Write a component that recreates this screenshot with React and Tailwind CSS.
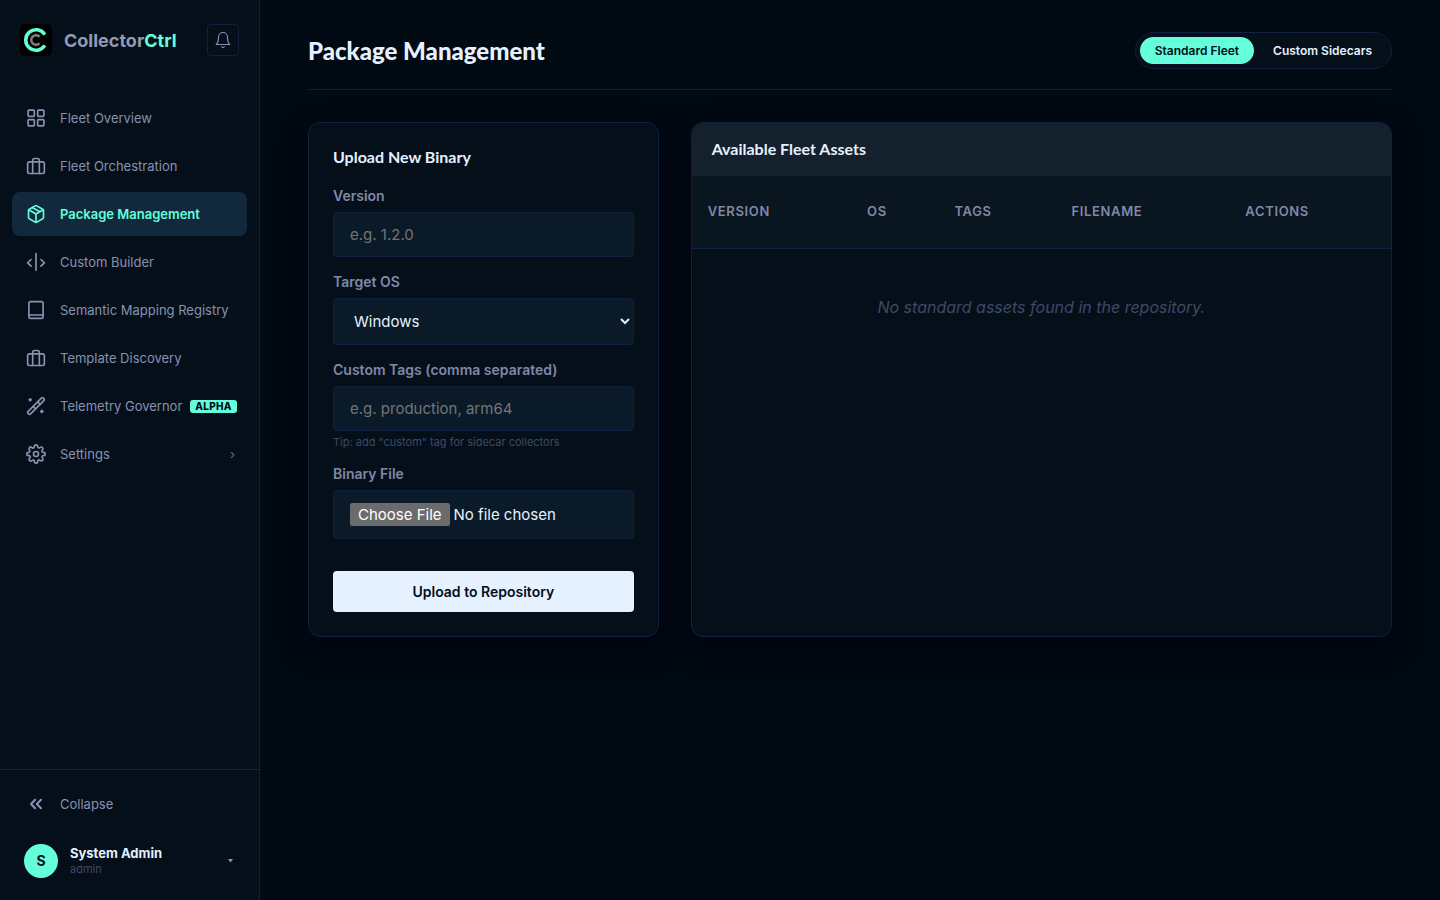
import { useState } from 'react'

function Icon({ size = 20, stroke = 2, children }) {
  return (
    <svg
      width={size}
      height={size}
      viewBox="0 0 24 24"
      fill="none"
      stroke="currentColor"
      strokeWidth={stroke}
      strokeLinecap="round"
      strokeLinejoin="round"
      aria-hidden="true"
      className="shrink-0"
    >
      {children}
    </svg>
  )
}

const GridIcon = () => (
  <Icon>
    <rect x="2.5" y="2.5" width="7.5" height="7.5" rx="1" />
    <rect x="14" y="2.5" width="7.5" height="7.5" rx="1" />
    <rect x="2.5" y="14" width="7.5" height="7.5" rx="1" />
    <rect x="14" y="14" width="7.5" height="7.5" rx="1" />
  </Icon>
)

const CaseIcon = () => (
  <Icon>
    <rect x="2" y="7" width="20" height="14" rx="2" />
    <path d="M16 21V5a2 2 0 0 0-2-2h-4a2 2 0 0 0-2 2v16" />
  </Icon>
)

const PackageIcon = () => (
  <Icon>
    <path d="M21 16V8a2 2 0 0 0-1-1.73l-7-4a2 2 0 0 0-2 0l-7 4A2 2 0 0 0 3 8v8a2 2 0 0 0 1 1.73l7 4a2 2 0 0 0 2 0l7-4A2 2 0 0 0 21 16z" />
    <path d="M16.5 9.4 7.5 4.21M3.27 6.96 12 12.01l8.73-5.05M12 22.08V12" />
  </Icon>
)

const BuilderIcon = () => (
  <Icon>
    <path d="M12 2v20M18 9l4 4-4 4M6 9l-4 4 4 4" />
  </Icon>
)

const BookIcon = () => (
  <Icon>
    <rect x="3.5" y="2" width="17" height="20" rx="2" />
    <path d="M4 18h16" />
  </Icon>
)

const WandIcon = () => (
  <Icon>
    <path d="M18.5 2.6 2.6 18.5a1.7 1.7 0 0 0 0 2.4l.5.5a1.7 1.7 0 0 0 2.4 0L21.4 5.5a1.7 1.7 0 0 0 0-2.4l-.5-.5a1.7 1.7 0 0 0-2.4 0z" />
    <path d="M14 7l3 3M8.5 12.5l3 3" />
    <path d="M4 4.5h2M5 3.5v2M18 18.5h2M19 17.5v2" strokeWidth="2.5" />
  </Icon>
)

const GearIcon = () => (
  <Icon>
    <circle cx="12" cy="12" r="3" />
    <path d="M19.4 15a1.65 1.65 0 0 0 .33 1.82l.06.06a2 2 0 1 1-2.83 2.83l-.06-.06a1.65 1.65 0 0 0-2.8 1.17V21a2 2 0 0 1-4 0v-.09a1.65 1.65 0 0 0-2.9-1.08l-.06.06a2 2 0 1 1-2.83-2.83l.06-.06A1.65 1.65 0 0 0 3.09 14H3a2 2 0 0 1 0-4h.09a1.65 1.65 0 0 0 1.18-2.82l-.06-.06a2 2 0 1 1 2.83-2.83l.06.06A1.65 1.65 0 0 0 10 3.09V3a2 2 0 0 1 4 0v.09a1.65 1.65 0 0 0 2.82 1.17l.06-.06a2 2 0 1 1 2.83 2.83l-.06.06A1.65 1.65 0 0 0 20.91 10H21a2 2 0 0 1 0 4h-.09a1.65 1.65 0 0 0-1.51 1z" />
  </Icon>
)

const NAV = [
  { label: 'Fleet Overview', icon: GridIcon },
  { label: 'Fleet Orchestration', icon: CaseIcon },
  { label: 'Package Management', icon: PackageIcon, active: true },
  { label: 'Custom Builder', icon: BuilderIcon },
  { label: 'Semantic Mapping Registry', icon: BookIcon },
  { label: 'Template Discovery', icon: CaseIcon },
  { label: 'Telemetry Governor', icon: WandIcon, badge: 'ALPHA' },
  { label: 'Settings', icon: GearIcon, expandable: true },
]

const COLUMNS = ['Version', 'OS', 'Tags', 'Filename', 'Actions']
const FLEETS = ['Standard Fleet', 'Custom Sidecars']

const fieldClass =
  'block w-full rounded-sm border border-[#0f2040] bg-[#0a1a28] px-4 py-3 text-[15px] leading-[19px] text-[#e6f1ff] outline-none placeholder:text-[#757575]'
const labelClass = 'mb-2 block text-sm leading-[17px] font-semibold text-[#8088a8]'

function Logo() {
  return (
    <svg width="32" height="32" viewBox="0 0 32 32" fill="none" aria-hidden="true" className="shrink-0">
      <rect width="32" height="32" rx="5" fill="#000" />
      <path d="M24.8 10.6A10.3 10.3 0 1 0 24.8 21.4" stroke="#64ffda" strokeWidth="3.5" />
      <path d="M19.6 12.8A4.8 4.8 0 1 0 19.6 19.2" stroke="#808080" strokeWidth="2.4" />
    </svg>
  )
}

function Sidebar() {
  return (
    <aside className="sticky top-0 flex h-screen w-65 shrink-0 flex-col border-r border-[#0f2040] bg-[#040f1a]">
      <div className="flex items-center px-5 py-6">
        <Logo />
        <span className="ml-3 flex-1 text-lg leading-[25px] font-bold text-[#8f9bb3]">
          Collector<span className="text-[#64ffda]">Ctrl</span>
        </span>
        <button
          type="button"
          aria-label="Notifications"
          className="flex size-8 items-center justify-center rounded-sm border border-[#0f2040] text-[#8892b0]"
        >
          <Icon size={18} stroke={1.5}>
            <path d="M18 8A6 6 0 0 0 6 8c0 7-2 9-3 10h18c-1-1-3-3-3-10M10.3 21a2 2 0 0 0 3.4 0" />
          </Icon>
        </button>
      </div>

      <nav className="flex flex-1 flex-col gap-1 px-3 py-4">
        {NAV.map(({ label, icon: NavIcon, active, badge, expandable }) => (
          <a
            key={label}
            href="#"
            aria-current={active ? 'page' : undefined}
            className={
              'flex h-11 items-center rounded-lg pl-3.5 pr-2 text-[13px] leading-5 whitespace-nowrap ' +
              (active ? 'bg-[#12293d] font-semibold text-[#64ffda]' : 'text-[#8892b0]')
            }
          >
            <NavIcon />
            <span className="ml-3.5">{label}</span>
            {badge && (
              <span className="ml-2 rounded-[3px] bg-[#64ffda] px-[5px] text-[10px] leading-[13px] font-extrabold tracking-wide text-[#020c1b]">
                {badge}
              </span>
            )}
            {expandable && <span className="mr-1 ml-auto text-[13px] opacity-70">›</span>}
          </a>
        ))}
      </nav>

      <div className="border-t border-[#0f2a40] px-3 pt-3 pb-4">
        <button type="button" className="flex h-11 w-full items-center pl-3.5 text-[13px] leading-5 text-[#8892b0]">
          <Icon stroke={2.5}>
            <path d="m11 17-5-5 5-5M18 17l-5-5 5-5" />
          </Icon>
          <span className="ml-3.5">Collapse</span>
        </button>
        <button type="button" className="mt-3 flex w-full items-center py-1.5 pr-3.5 pl-3 text-left">
          <span className="flex size-[34px] items-center justify-center rounded-full bg-[#64ffda] text-sm font-bold text-[#020c1b]">
            S
          </span>
          <span className="ml-3 flex-1">
            <span className="block text-[13px] leading-4 font-bold text-[#e6f1ff]">System Admin</span>
            <span className="block text-[11px] leading-4 text-[#3d4a63]">admin</span>
          </span>
          <svg width="5" height="4" viewBox="0 0 5 4" fill="#8892b0" aria-hidden="true">
            <path d="M0 0h5L2.5 3.5z" />
          </svg>
        </button>
      </div>
    </aside>
  )
}

function UploadCard() {
  return (
    <form className="rounded-xl border border-[#0f2040] bg-[#040f1a] p-6 shadow-[0_10px_30px_#000411]">
      <h2 className="mb-5 font-[Lato,sans-serif] text-base leading-5 font-bold text-[#e6f1ff]">Upload New Binary</h2>
      <div className="mb-4">
        <label htmlFor="version" className={labelClass}>Version</label>
        <input id="version" type="text" placeholder="e.g. 1.2.0" className={fieldClass} />
      </div>
      <div className="mb-4">
        <label htmlFor="os" className={labelClass}>Target OS</label>
        <select id="os" className={fieldClass + ' h-[47px] scheme-dark'}>
          <option>Windows</option>
          <option>Linux</option>
        </select>
      </div>
      <div className="mb-4">
        <label htmlFor="tags" className={labelClass}>Custom Tags (comma separated)</label>
        <input id="tags" type="text" placeholder="e.g. production, arm64" className={fieldClass} />
        <p className="mt-1 text-[11px] leading-[14px] text-[#3d4a63]">
          Tip: add "custom" tag for sidecar collectors
        </p>
      </div>
      <div className="mb-8">
        <label htmlFor="binary" className={labelClass}>Binary File</label>
        <input
          id="binary"
          type="file"
          className={
            fieldClass +
            ' file:mr-1 file:rounded-xs file:bg-[#6b6b6b] file:px-2 file:py-0.5 file:leading-[19px] file:text-white'
          }
        />
      </div>
      <button
        type="button"
        className="block w-full rounded-sm bg-[#e6f1ff] py-3 text-sm leading-[17px] font-semibold text-[#020c1b]"
      >
        Upload to Repository
      </button>
    </form>
  )
}

function AssetsCard() {
  return (
    <section className="overflow-hidden rounded-xl border border-[#0f2040] bg-[#040f1a] shadow-[0_10px_30px_#000411]">
      <div className="border-b border-[#0f2040] bg-[#14202b] px-5 py-4">
        <h2 className="font-[Lato,sans-serif] text-base leading-5 font-bold text-[#e6f1ff]">Available Fleet Assets</h2>
      </div>
      <table className="w-full border-collapse">
        <thead>
          <tr className="border-b border-[#0f2040] bg-[#09151f]">
            {COLUMNS.map((c) => (
              <th
                key={c}
                className="h-[72px] px-4 text-left text-[13px] font-semibold tracking-wider text-[#8088a8] uppercase"
              >
                {c}
              </th>
            ))}
          </tr>
        </thead>
        <tbody>
          <tr>
            <td colSpan={COLUMNS.length} className="p-12 text-center text-base leading-5 text-[#3d4a63] italic">
              No standard assets found in the repository.
            </td>
          </tr>
        </tbody>
      </table>
    </section>
  )
}

export default function App() {
  const [fleet, setFleet] = useState('Standard Fleet')

  return (
    <div className="flex min-h-screen bg-[#010a12] font-[Inter,sans-serif]">
      <Sidebar />
      <main className="min-w-0 flex-1 px-12 py-8">
        <header className="mb-8 flex items-center justify-between border-b border-[#0f2040] pb-5">
          <h1 className="font-[Lato,sans-serif] text-2xl font-black text-[#e6f1ff]">Package Management</h1>
          <div className="flex rounded-full border border-[#0f2040] bg-[#040f1a] p-1">
            {FLEETS.map((f) => (
              <button
                key={f}
                type="button"
                onClick={() => setFleet(f)}
                className={
                  'rounded-full px-[15px] text-xs leading-[27px] font-semibold ' +
                  (fleet === f ? 'bg-[#64ffda] text-[#020c1b]' : 'ml-1 text-[#e6f1ff]')
                }
              >
                {f}
              </button>
            ))}
          </div>
        </header>

        <div className="grid grid-cols-[1fr_2fr] gap-8">
          <UploadCard />
          <AssetsCard />
        </div>
      </main>
    </div>
  )
}
